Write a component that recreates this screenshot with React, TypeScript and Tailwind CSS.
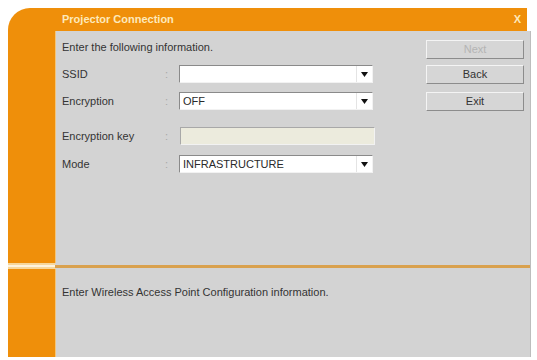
import { JSX } from "react";

const font = { fontFamily: '"Liberation Sans", Arial, sans-serif' };

function Arrow(): JSX.Element {
    return (
        <svg width="7" height="5" viewBox="0 0 7 5" className="block">
            <path d="M0 0 H7 L3.5 5 Z" fill="#111" />
        </svg>
    );
}

function Select({ value }: { value: string }): JSX.Element {
    return (
        <div className="flex h-[18px] w-[194px] items-center border border-t-[#8a8a8a] border-l-[#8a8a8a] border-b-[#f2f2f2] border-r-[#f2f2f2] bg-white">
            <span className="flex-1 pl-[3px] text-[11px] leading-none text-[#2a2a2a]">
                {value}
            </span>
            <span className="flex h-full w-[16px] items-center justify-center border-l border-[#e4e4e4]">
                <Arrow />
            </span>
        </div>
    );
}

function Row({
    label,
    className,
    children,
}: {
    label: string;
    className: string;
    children: JSX.Element;
}): JSX.Element {
    return (
        <div className={`flex h-[18px] items-center ${className}`}>
            <span className="w-[103px] text-[11px] text-[#333]">{label}</span>
            <span className="w-[14px] text-[11px] text-[#a8a8a8]">:</span>
            {children}
        </div>
    );
}

function Button({
    label,
    disabled,
    className,
}: {
    label: string;
    disabled?: boolean;
    className: string;
}): JSX.Element {
    return (
        <div
            className={`flex h-[19px] w-[98px] items-center justify-center border border-t-[#f4f4f4] border-l-[#f4f4f4] border-b-[#8c8c8c] border-r-[#8c8c8c] bg-[#d6d6d6] text-[11px] ${
                disabled ? "text-[#b4b4b4]" : "text-[#333]"
            } ${className}`}
        >
            {label}
        </div>
    );
}

export default function App(): JSX.Element {
    return (
        <div className="h-[360px] w-[537px] bg-white pl-[8px] pt-[8px]" style={font}>
            <div className="flex w-[523px] flex-col">
                {/* title bar */}
                <div className="mr-[4px] flex h-[23px] items-center rounded-tl-[22px] bg-[#ef8f0a] pl-[54px] pr-[6px]">
                    <span className="flex-1 text-[11px] font-bold text-[#fde9bb]">
                        Projector Connection
                    </span>
                    <span className="text-[11px] font-bold text-[#fde9bb]">X</span>
                </div>

                {/* main panel */}
                <div className="flex h-[232px]">
                    <div className="w-[47px] bg-[#ef8f0a]" />
                    <div className="flex flex-1 border-l border-[#f3c57a] border-r border-r-[#bdbdbd] bg-[#d3d3d3]">
                        <div className="flex-1 pl-[6px] pt-[10px]">
                            <div className="h-[13px] text-[11px] leading-[13px] text-[#333]">
                                Enter the following information.
                            </div>
                            <Row label="SSID" className="mt-[11px]">
                                <Select value="" />
                            </Row>
                            <Row label="Encryption" className="mt-[9px]">
                                <Select value="OFF" />
                            </Row>
                            <Row label="Encryption key" className="mt-[17px]">
                                <div className="ml-[1px] h-[18px] w-[195px] border border-t-[#a8a8a8] border-l-[#a8a8a8] border-b-[#f2f2f2] border-r-[#f2f2f2] bg-[#ecebdd]" />
                            </Row>
                            <Row label="Mode" className="mt-[10px]">
                                <Select value="INFRASTRUCTURE" />
                            </Row>
                        </div>
                        <div className="mr-[6px] flex flex-col pt-[9px]">
                            <Button label="Next" disabled className="" />
                            <Button label="Back" className="mt-[6px]" />
                            <Button label="Exit" className="mt-[8px]" />
                        </div>
                    </div>
                </div>

                {/* separator */}
                <div className="flex h-[6px]">
                    <div className="flex w-[47px] flex-col justify-center bg-[#f6d79c]">
                        <div className="h-[2px] bg-[#fff3dc]" />
                    </div>
                    <div className="flex flex-1 flex-col justify-center border-r border-[#bdbdbd] bg-[#d3d3d3]">
                        <div className="h-[3px] bg-[#d9a14e]" />
                    </div>
                </div>

                {/* hint panel */}
                <div className="flex h-[88px]">
                    <div className="w-[47px] bg-[#ef8f0a]" />
                    <div className="flex-1 border-l border-[#f3c57a] border-r border-r-[#bdbdbd] bg-[#d3d3d3] pl-[6px] pt-[17px]">
                        <div className="text-[11px] leading-[13px] text-[#333]">
                            Enter Wireless Access Point Configuration information.
                        </div>
                    </div>
                </div>
            </div>
        </div>
    );
}
